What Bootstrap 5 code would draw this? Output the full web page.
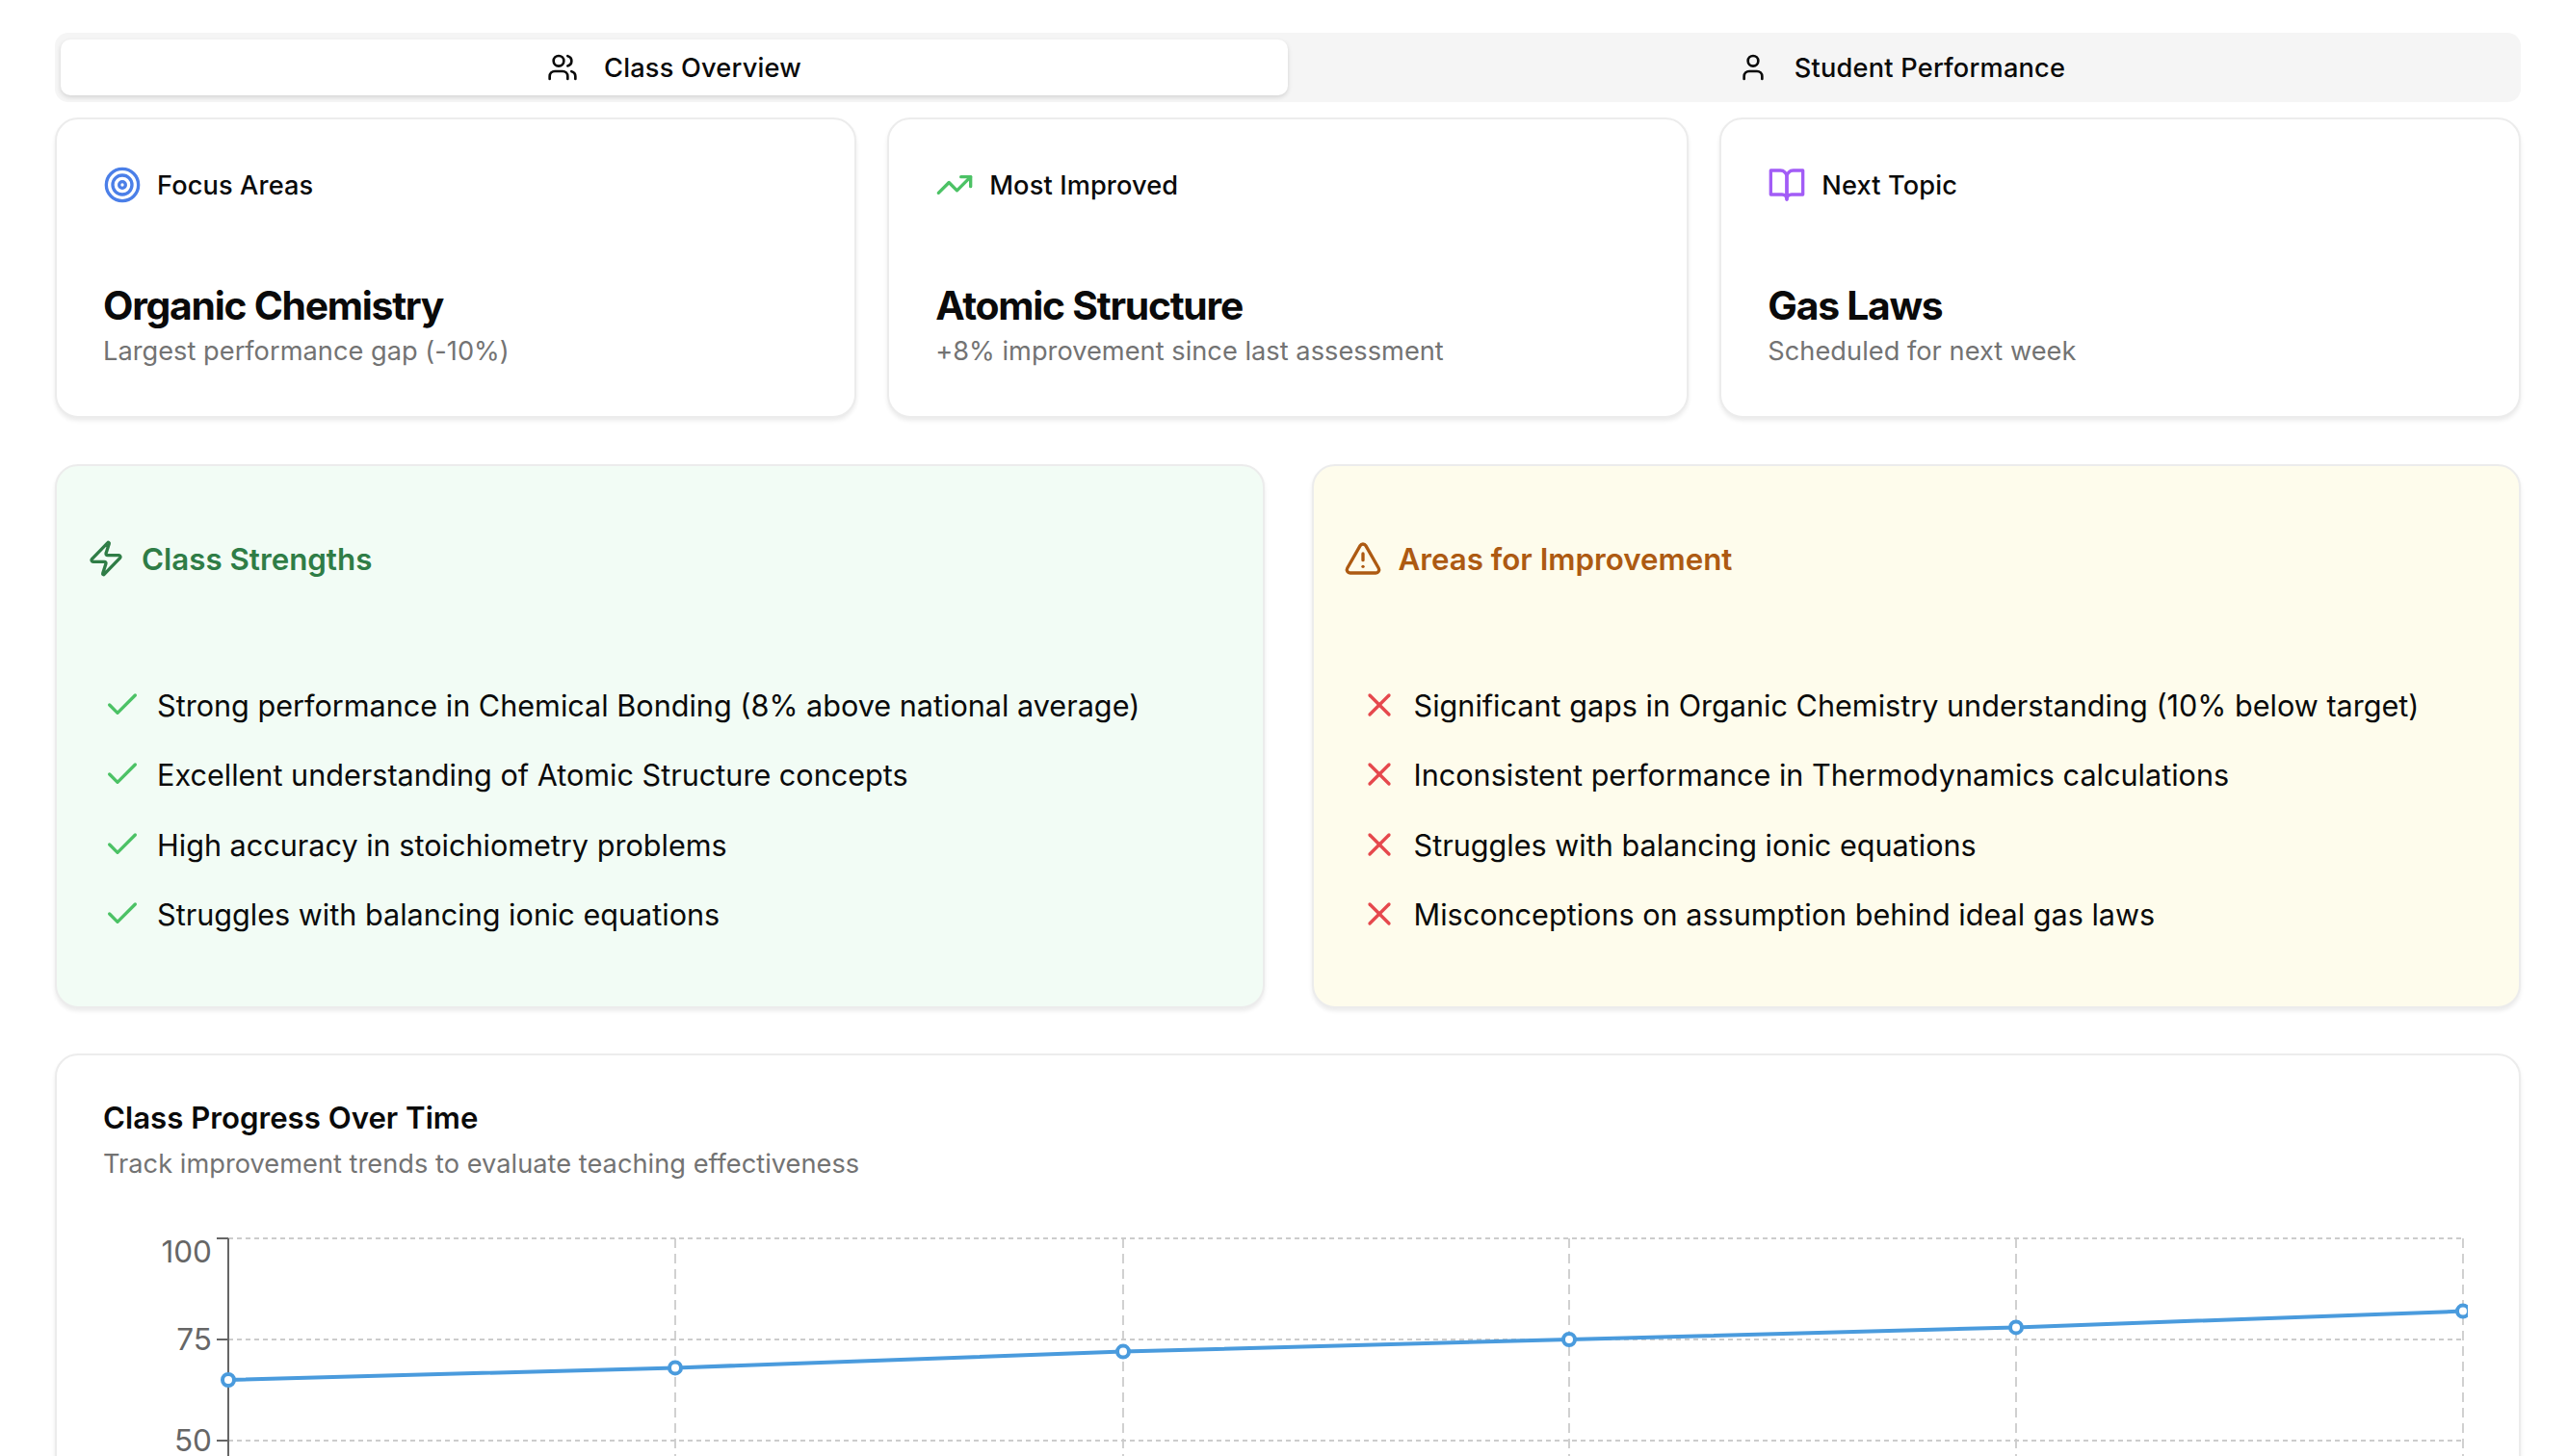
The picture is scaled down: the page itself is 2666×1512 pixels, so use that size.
<!DOCTYPE html>
<html lang="en">
<head>
<meta charset="utf-8">
<title>Class Overview</title>
<link rel="stylesheet" href="https://cdn.jsdelivr.net/npm/bootstrap@5.3.0/dist/css/bootstrap.min.css">
<style>
html,body{height:1512px;overflow:hidden;background:#fff}
body{font-family:Inter,"Liberation Sans",sans-serif;color:#0a0a0a;-webkit-font-smoothing:antialiased}
.pagewrap{padding:34px 49px 0 57px}
.lu{fill:none;stroke:currentColor;stroke-width:2;stroke-linecap:round;stroke-linejoin:round;flex:none}
.ic40{width:40px;height:40px}
.ic32{width:32px;height:32px}
.drop{padding-top:2px}
.tabbar{height:72px;background:#f5f5f5;border-radius:14px;padding:7px 6px}
.tabbtn{flex:1 1 0;border:0;background:transparent;border-radius:10px;font-size:27.2px;font-weight:460;letter-spacing:.2px;line-height:40px;color:#0a0a0a;gap:27px}
.tabbtn.on{background:#fff;box-shadow:0 2px 5px rgba(0,0,0,.14)}
.tile{border:2px solid #ececec;border-radius:24px;box-shadow:0 3px 4px rgba(0,0,0,.08);background:#fff}
.stats{margin-top:16px;display:grid;grid-template-columns:repeat(3,1fr);gap:32.5px}
.stat{height:312px;padding:48px 48px 0}
.statlabel{height:40px;font-size:27.2px;font-weight:460;letter-spacing:.12px;line-height:40px;gap:16px}
.stattitle{font-size:40.8px;font-weight:700;line-height:50px;margin:80px 0 3px;letter-spacing:-1.25px}
.muted{font-size:27.2px;line-height:40px;color:#737373;letter-spacing:.03px}
.panels{margin-top:48px;display:grid;grid-template-columns:1fr 1fr;gap:49px}
.panel{height:565px;padding:76px 48px 0}
.panel.good{background:#f2fcf5}
.panel.warn{background:#fefcec}
.panelhead{height:40px;font-size:31.3px;font-weight:600;line-height:40px;gap:17px;margin:0 0 112px -17px}
.good .panelhead{color:#2f7d46}
.warn .panelhead{color:#ad5a12}
.pts{list-style:none;margin:0;padding:0;display:flex;flex-direction:column;gap:30.3px}
.pts li{display:flex;gap:16px;font-size:30.6px;line-height:42px}
.good .pts svg{color:#4cc265}
.warn .pts svg{color:#e5484d}
.chartcard{margin-top:47px;height:600px;padding:43px 48px 0}
.charthead{font-size:31.2px;font-weight:600;line-height:44px}
.chartsub{margin-top:6px}
.chartbox{width:2560px;height:300px;margin:37px 0 0 -105px}
.chartbox svg{display:block}
.chartbox text{font-family:Inter,"Liberation Sans",sans-serif;font-size:31.5px;fill:#666}
.gh{stroke:#ccc;stroke-width:2;stroke-dasharray:5 4}
.gv{stroke:#ccc;stroke-width:1.8;stroke-dasharray:10 6}
.ax{stroke:#666;stroke-width:2}
</style>
</head>
<body>
<div class="pagewrap">
  <div class="tabbar d-flex">
    <button class="tabbtn on d-flex align-items-center justify-content-center" type="button">
      <svg class="lu ic32" viewBox="0 0 24 24"><path d="M16 21v-2a4 4 0 0 0-4-4H6a4 4 0 0 0-4 4v2"/><circle cx="9" cy="7" r="4"/><path d="M22 21v-2a4 4 0 0 0-3-3.87"/><path d="M16 3.13a4 4 0 0 1 0 7.75"/></svg>
      <span class="drop">Class Overview</span></button>
    <button class="tabbtn d-flex align-items-center justify-content-center" type="button">
      <svg class="lu ic32" viewBox="0 0 24 24"><path d="M19 21v-2a4 4 0 0 0-4-4H9a4 4 0 0 0-4 4v2"/><circle cx="12" cy="7" r="4"/></svg>
      <span class="drop">Student Performance</span></button>
  </div>

  <div class="stats">
    <div class="card tile stat">
      <div class="statlabel d-flex align-items-center">
        <svg class="lu ic40" style="color:#4b7fe8" viewBox="0 0 24 24"><circle cx="12" cy="12" r="10"/><circle cx="12" cy="12" r="6"/><circle cx="12" cy="12" r="2"/></svg>
        <span class="drop">Focus Areas</span></div>
      <div class="stattitle">Organic Chemistry</div>
      <div class="muted">Largest performance gap (-10%)</div>
    </div>
    <div class="card tile stat">
      <div class="statlabel d-flex align-items-center">
        <svg class="lu ic40" style="color:#4cc265" viewBox="0 0 24 24"><polyline points="22 7 13.5 15.5 8.5 10.5 2 17"/><polyline points="16 7 22 7 22 13"/></svg>
        <span class="drop">Most Improved</span></div>
      <div class="stattitle">Atomic Structure</div>
      <div class="muted">+8% improvement since last assessment</div>
    </div>
    <div class="card tile stat">
      <div class="statlabel d-flex align-items-center">
        <svg class="lu ic40" style="color:#a25cf6" viewBox="0 0 24 24"><path d="M2 3h6a4 4 0 0 1 4 4v14a3 3 0 0 0-3-3H2z"/><path d="M22 3h-6a4 4 0 0 0-4 4v14a3 3 0 0 1 3-3h7z"/></svg>
        <span class="drop">Next Topic</span></div>
      <div class="stattitle">Gas Laws</div>
      <div class="muted">Scheduled for next week</div>
    </div>
  </div>

  <div class="panels">
    <div class="card tile panel good">
      <div class="panelhead d-flex align-items-center">
        <svg class="lu ic40" viewBox="0 0 24 24"><path d="M4 14a1 1 0 0 1-.78-1.63l9.9-10.2a.5.5 0 0 1 .86.46l-1.92 6.02A1 1 0 0 0 13 10h7a1 1 0 0 1 .78 1.63l-9.9 10.2a.5.5 0 0 1-.86-.46l1.92-6.02A1 1 0 0 0 11 14z"/></svg>
        <span class="drop">Class Strengths</span></div>
      <ul class="pts">
        <li><svg class="lu ic40" viewBox="0 0 24 24"><path d="M20 6 9 17l-5-5"/></svg>Strong performance in Chemical Bonding (8% above national average)</li>
        <li><svg class="lu ic40" viewBox="0 0 24 24"><path d="M20 6 9 17l-5-5"/></svg>Excellent understanding of Atomic Structure concepts</li>
        <li><svg class="lu ic40" viewBox="0 0 24 24"><path d="M20 6 9 17l-5-5"/></svg>High accuracy in stoichiometry problems</li>
        <li><svg class="lu ic40" viewBox="0 0 24 24"><path d="M20 6 9 17l-5-5"/></svg>Struggles with balancing ionic equations</li>
      </ul>
    </div>
    <div class="card tile panel warn">
      <div class="panelhead d-flex align-items-center">
        <svg class="lu ic40" viewBox="0 0 24 24"><path d="m21.73 18-8-14a2 2 0 0 0-3.48 0l-8 14A2 2 0 0 0 4 21h16a2 2 0 0 0 1.73-3"/><path d="M12 9v4"/><path d="M12 17h.01"/></svg>
        <span class="drop">Areas for Improvement</span></div>
      <ul class="pts">
        <li><svg class="lu ic40" viewBox="0 0 24 24"><path d="M18 6 6 18"/><path d="m6 6 12 12"/></svg>Significant gaps in Organic Chemistry understanding (10% below target)</li>
        <li><svg class="lu ic40" viewBox="0 0 24 24"><path d="M18 6 6 18"/><path d="m6 6 12 12"/></svg>Inconsistent performance in Thermodynamics calculations</li>
        <li><svg class="lu ic40" viewBox="0 0 24 24"><path d="M18 6 6 18"/><path d="m6 6 12 12"/></svg>Struggles with balancing ionic equations</li>
        <li><svg class="lu ic40" viewBox="0 0 24 24"><path d="M18 6 6 18"/><path d="m6 6 12 12"/></svg>Misconceptions on assumption behind ideal gas laws</li>
      </ul>
    </div>
  </div>

  <div class="card tile chartcard">
    <div class="charthead">Class Progress Over Time</div>
    <div class="muted chartsub">Track improvement trends to evaluate teaching effectiveness</div>
    <div class="chartbox">
      <svg width="2560" height="300" viewBox="2 1266 2560 300" xmlns="http://www.w3.org/2000/svg">
        <line class="gh" x1="237" x2="2557" y1="1286" y2="1286"/>
        <line class="gh" x1="237" x2="2557" y1="1391" y2="1391"/>
        <line class="gh" x1="237" x2="2557" y1="1496" y2="1496"/>
        <line class="ax" x1="225" x2="237" y1="1286" y2="1286"/>
        <line class="ax" x1="225" x2="237" y1="1391" y2="1391"/>
        <line class="ax" x1="225" x2="237" y1="1496" y2="1496"/>
        <line class="gv" x1="701" x2="701" y1="1286" y2="1520"/>
        <line class="gv" x1="1166" x2="1166" y1="1286" y2="1520"/>
        <line class="gv" x1="1629" x2="1629" y1="1286" y2="1520"/>
        <line class="gv" x1="2093" x2="2093" y1="1286" y2="1520"/>
        <line class="gv" x1="2557" x2="2557" y1="1286" y2="1520"/>
        <line class="ax" x1="237" x2="237" y1="1286" y2="1520"/>
        <text x="220" y="1311" text-anchor="end">100</text>
        <text x="220" y="1402" text-anchor="end">75</text>
        <text x="220" y="1507" text-anchor="end">50</text>
        <polyline fill="none" stroke="#4a9bdd" stroke-width="4" points="237,1433 701,1420.4 1166,1403.6 1629,1391 2093,1378.4 2557,1361.6"/>
        <g fill="#fff" stroke="#4a9bdd" stroke-width="4">
          <circle cx="237" cy="1433" r="6"/>
          <circle cx="701" cy="1420.4" r="6"/>
          <circle cx="1166" cy="1403.6" r="6"/>
          <circle cx="1629" cy="1391" r="6"/>
          <circle cx="2093" cy="1378.4" r="6"/>
          <circle cx="2557" cy="1361.6" r="6"/>
        </g>
      </svg>
    </div>
  </div>
</div>
<script src="https://cdn.jsdelivr.net/npm/bootstrap@5.3.0/dist/js/bootstrap.bundle.min.js"></script>
</body>
</html>
